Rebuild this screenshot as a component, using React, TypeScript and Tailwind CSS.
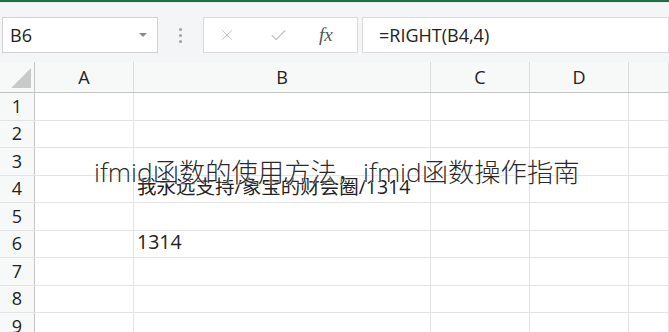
import { Check, X } from "lucide-react"

const cols = [
  { name: "A", w: "w-[99px]" },
  { name: "B", w: "w-[297px]" },
  { name: "C", w: "w-[99px]" },
  { name: "D", w: "w-[99px]" },
  { name: "", w: "w-[40px]" },
]

const cells: Record<number, string> = {
  4: "我永远支持/象宝的财会圈/1314",
  6: "1314",
}

export default function App() {
  const rows = [1, 2, 3, 4, 5, 6, 7, 8, 9]
  return (
    <div
      className="relative w-[669px] h-[332px] overflow-hidden bg-white text-[#222]"
      style={{ fontFamily: '"Open Sans", "Noto Sans CJK SC", sans-serif' }}
    >
      <div className="h-[2px] bg-[#1e7145]" />
      <div className="h-[60px] bg-[#f4f5f6] flex items-start pt-[14px] border-t border-[#e8ecea]">
        <div className="ml-[2px] w-[156px] h-[36px] bg-white border border-[#d2d2d2] flex items-center justify-between pl-[7px] pr-[10px]">
          <span className="text-[18px]">B6</span>
          <span className="w-0 h-0 border-l-[4px] border-r-[4px] border-t-[4px] border-l-transparent border-r-transparent border-t-[#8a8a8a]" />
        </div>
        <div className="w-[45px] h-[36px] flex flex-col items-center justify-center gap-[3px]">
          <span className="w-[3px] h-[3px] rounded-full bg-[#a0a0a0]" />
          <span className="w-[3px] h-[3px] rounded-full bg-[#a0a0a0]" />
          <span className="w-[3px] h-[3px] rounded-full bg-[#a0a0a0]" />
        </div>
        <div className="w-[155px] h-[36px] bg-white border border-[#dadada] flex items-center">
          <X className="ml-[14px] w-[18px] h-[18px] text-[#c4c4c4]" strokeWidth={1.3} />
          <Check className="ml-[33px] w-[19px] h-[19px] text-[#c4c4c4]" strokeWidth={1.6} />
          <span
            className="ml-[31px] text-[19px] italic text-[#555]"
            style={{ fontFamily: '"Liberation Serif", serif' }}
          >
            fx
          </span>
        </div>
        <div className="ml-[4px] flex-1 h-[36px] bg-white border border-[#dadada] flex items-center pl-[16px]">
          <span className="text-[18px]">=RIGHT(B4,4)</span>
        </div>
      </div>
      <div className="flex h-[31px] bg-[#f7f8f8] border-b border-[#c4c4c4]">
        <div className="w-[35px] border-r border-[#c4c4c4] flex items-end justify-end pb-[4px] pr-[3px]">
          <span className="block w-0 h-0 border-b-[20px] border-l-[20px] border-l-transparent border-b-[#c9c9c9]" />
        </div>
        {cols.map((c, i) => (
          <div key={i} className={`${c.w} shrink-0 border-r border-[#dcdcdc] flex items-center justify-center text-[18px]`}>
            {c.name}
          </div>
        ))}
      </div>
      {rows.map((r) => (
        <div key={r} className="flex h-[27.5px] border-b border-[#e3e3e3]">
          <div className="w-[35px] shrink-0 bg-[#f7f8f8] border-r border-[#c4c4c4] flex items-center justify-center text-[18px]">
            {r}
          </div>
          {cols.map((c, i) => (
            <div key={i} className={`${c.w} shrink-0 border-r border-[#e3e3e3] flex items-end pl-[3px] pb-[1px] whitespace-nowrap text-[19.5px] overflow-visible`}>
              {i === 1 ? cells[r] ?? "" : ""}
            </div>
          ))}
        </div>
      ))}
      <div
        className="absolute left-[94px] top-[153px] text-[26.3px] font-light text-[#2a2a2a] whitespace-nowrap"
        style={{ textShadow: "0 0 2px #fff, 0 0 2px #fff" }}
      >
        ifmid函数的使用方法，ifmid函数操作指南
      </div>
    </div>
  )
}
